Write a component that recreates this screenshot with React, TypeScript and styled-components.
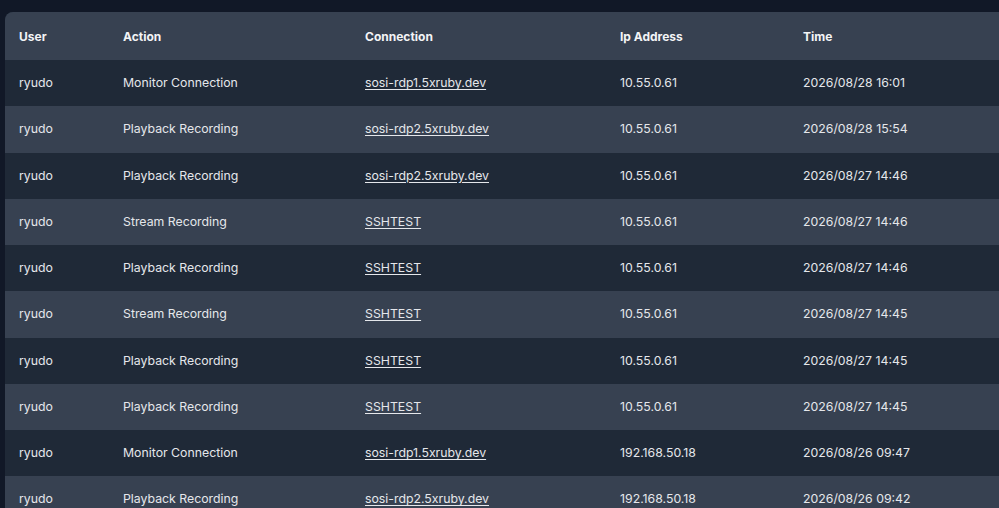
import { createGlobalStyle, styled } from "styled-components";

interface LogEntry {
  user: string;
  action: string;
  connection: string;
  ip: string;
  time: string;
}

const GlobalStyle = createGlobalStyle`
  html, body {
    margin: 0;
    padding: 0;
    background: #111827;
    overflow: hidden;
  }
  body {
    font-family: Inter, "Noto Sans", "Liberation Sans", sans-serif;
    -webkit-font-smoothing: antialiased;
  }
`;

const Page = styled.div`
  padding: 12px 0 0 5px;
  height: 508px;
  box-sizing: border-box;
`;

const Panel = styled.div`
  width: 1040px;
  border-radius: 8px 0 0 0;
  overflow: hidden;
  background: #1f2937;
`;

const Table = styled.table`
  width: 100%;
  border-collapse: collapse;
  table-layout: fixed;
`;

const HeadRow = styled.tr`
  background: #374151;
  height: 48px;
`;

const HeadCell = styled.th<{ $width: number }>`
  box-sizing: border-box;
  width: ${(p) => p.$width}px;
  padding: 0 14px;
  text-align: left;
  font-size: 12px;
  font-weight: 700;
  color: #f3f4f6;
`;

const Row = styled.tr<{ $striped: boolean }>`
  height: 46.25px;
  background: ${(p) => (p.$striped ? "#374151" : "#1f2937")};
`;

const Cell = styled.td`
  box-sizing: border-box;
  padding: 0 14px 1px;
  font-size: 12.3px;
  color: #e5e7eb;
  white-space: nowrap;
`;

const ConnectionLink = styled.a`
  color: #e5e7eb;
  text-decoration: underline;
  text-underline-offset: 2px;
  cursor: pointer;
`;

const columns = [
  { label: "User", width: 104 },
  { label: "Action", width: 242 },
  { label: "Connection", width: 255 },
  { label: "Ip Address", width: 183 },
  { label: "Time", width: 256 },
];

const entries: LogEntry[] = [
  { user: "ryudo", action: "Monitor Connection", connection: "sosi-rdp1.5xruby.dev", ip: "10.55.0.61", time: "2026/08/28 16:01" },
  { user: "ryudo", action: "Playback Recording", connection: "sosi-rdp2.5xruby.dev", ip: "10.55.0.61", time: "2026/08/28 15:54" },
  { user: "ryudo", action: "Playback Recording", connection: "sosi-rdp2.5xruby.dev", ip: "10.55.0.61", time: "2026/08/27 14:46" },
  { user: "ryudo", action: "Stream Recording", connection: "SSHTEST", ip: "10.55.0.61", time: "2026/08/27 14:46" },
  { user: "ryudo", action: "Playback Recording", connection: "SSHTEST", ip: "10.55.0.61", time: "2026/08/27 14:46" },
  { user: "ryudo", action: "Stream Recording", connection: "SSHTEST", ip: "10.55.0.61", time: "2026/08/27 14:45" },
  { user: "ryudo", action: "Playback Recording", connection: "SSHTEST", ip: "10.55.0.61", time: "2026/08/27 14:45" },
  { user: "ryudo", action: "Playback Recording", connection: "SSHTEST", ip: "10.55.0.61", time: "2026/08/27 14:45" },
  { user: "ryudo", action: "Monitor Connection", connection: "sosi-rdp1.5xruby.dev", ip: "192.168.50.18", time: "2026/08/26 09:47" },
  { user: "ryudo", action: "Playback Recording", connection: "sosi-rdp2.5xruby.dev", ip: "192.168.50.18", time: "2026/08/26 09:42" },
];

const App = () => {
  return (
    <Page>
      <GlobalStyle />
      <Panel>
        <Table>
          <thead>
            <HeadRow>
              {columns.map((col) => (
                <HeadCell key={col.label} $width={col.width}>
                  {col.label}
                </HeadCell>
              ))}
            </HeadRow>
          </thead>
          <tbody>
            {entries.map((entry, i) => (
              <Row key={i} $striped={i % 2 === 1}>
                <Cell>{entry.user}</Cell>
                <Cell>{entry.action}</Cell>
                <Cell>
                  <ConnectionLink>{entry.connection}</ConnectionLink>
                </Cell>
                <Cell>{entry.ip}</Cell>
                <Cell>{entry.time}</Cell>
              </Row>
            ))}
          </tbody>
        </Table>
      </Panel>
    </Page>
  );
};

export default App;
